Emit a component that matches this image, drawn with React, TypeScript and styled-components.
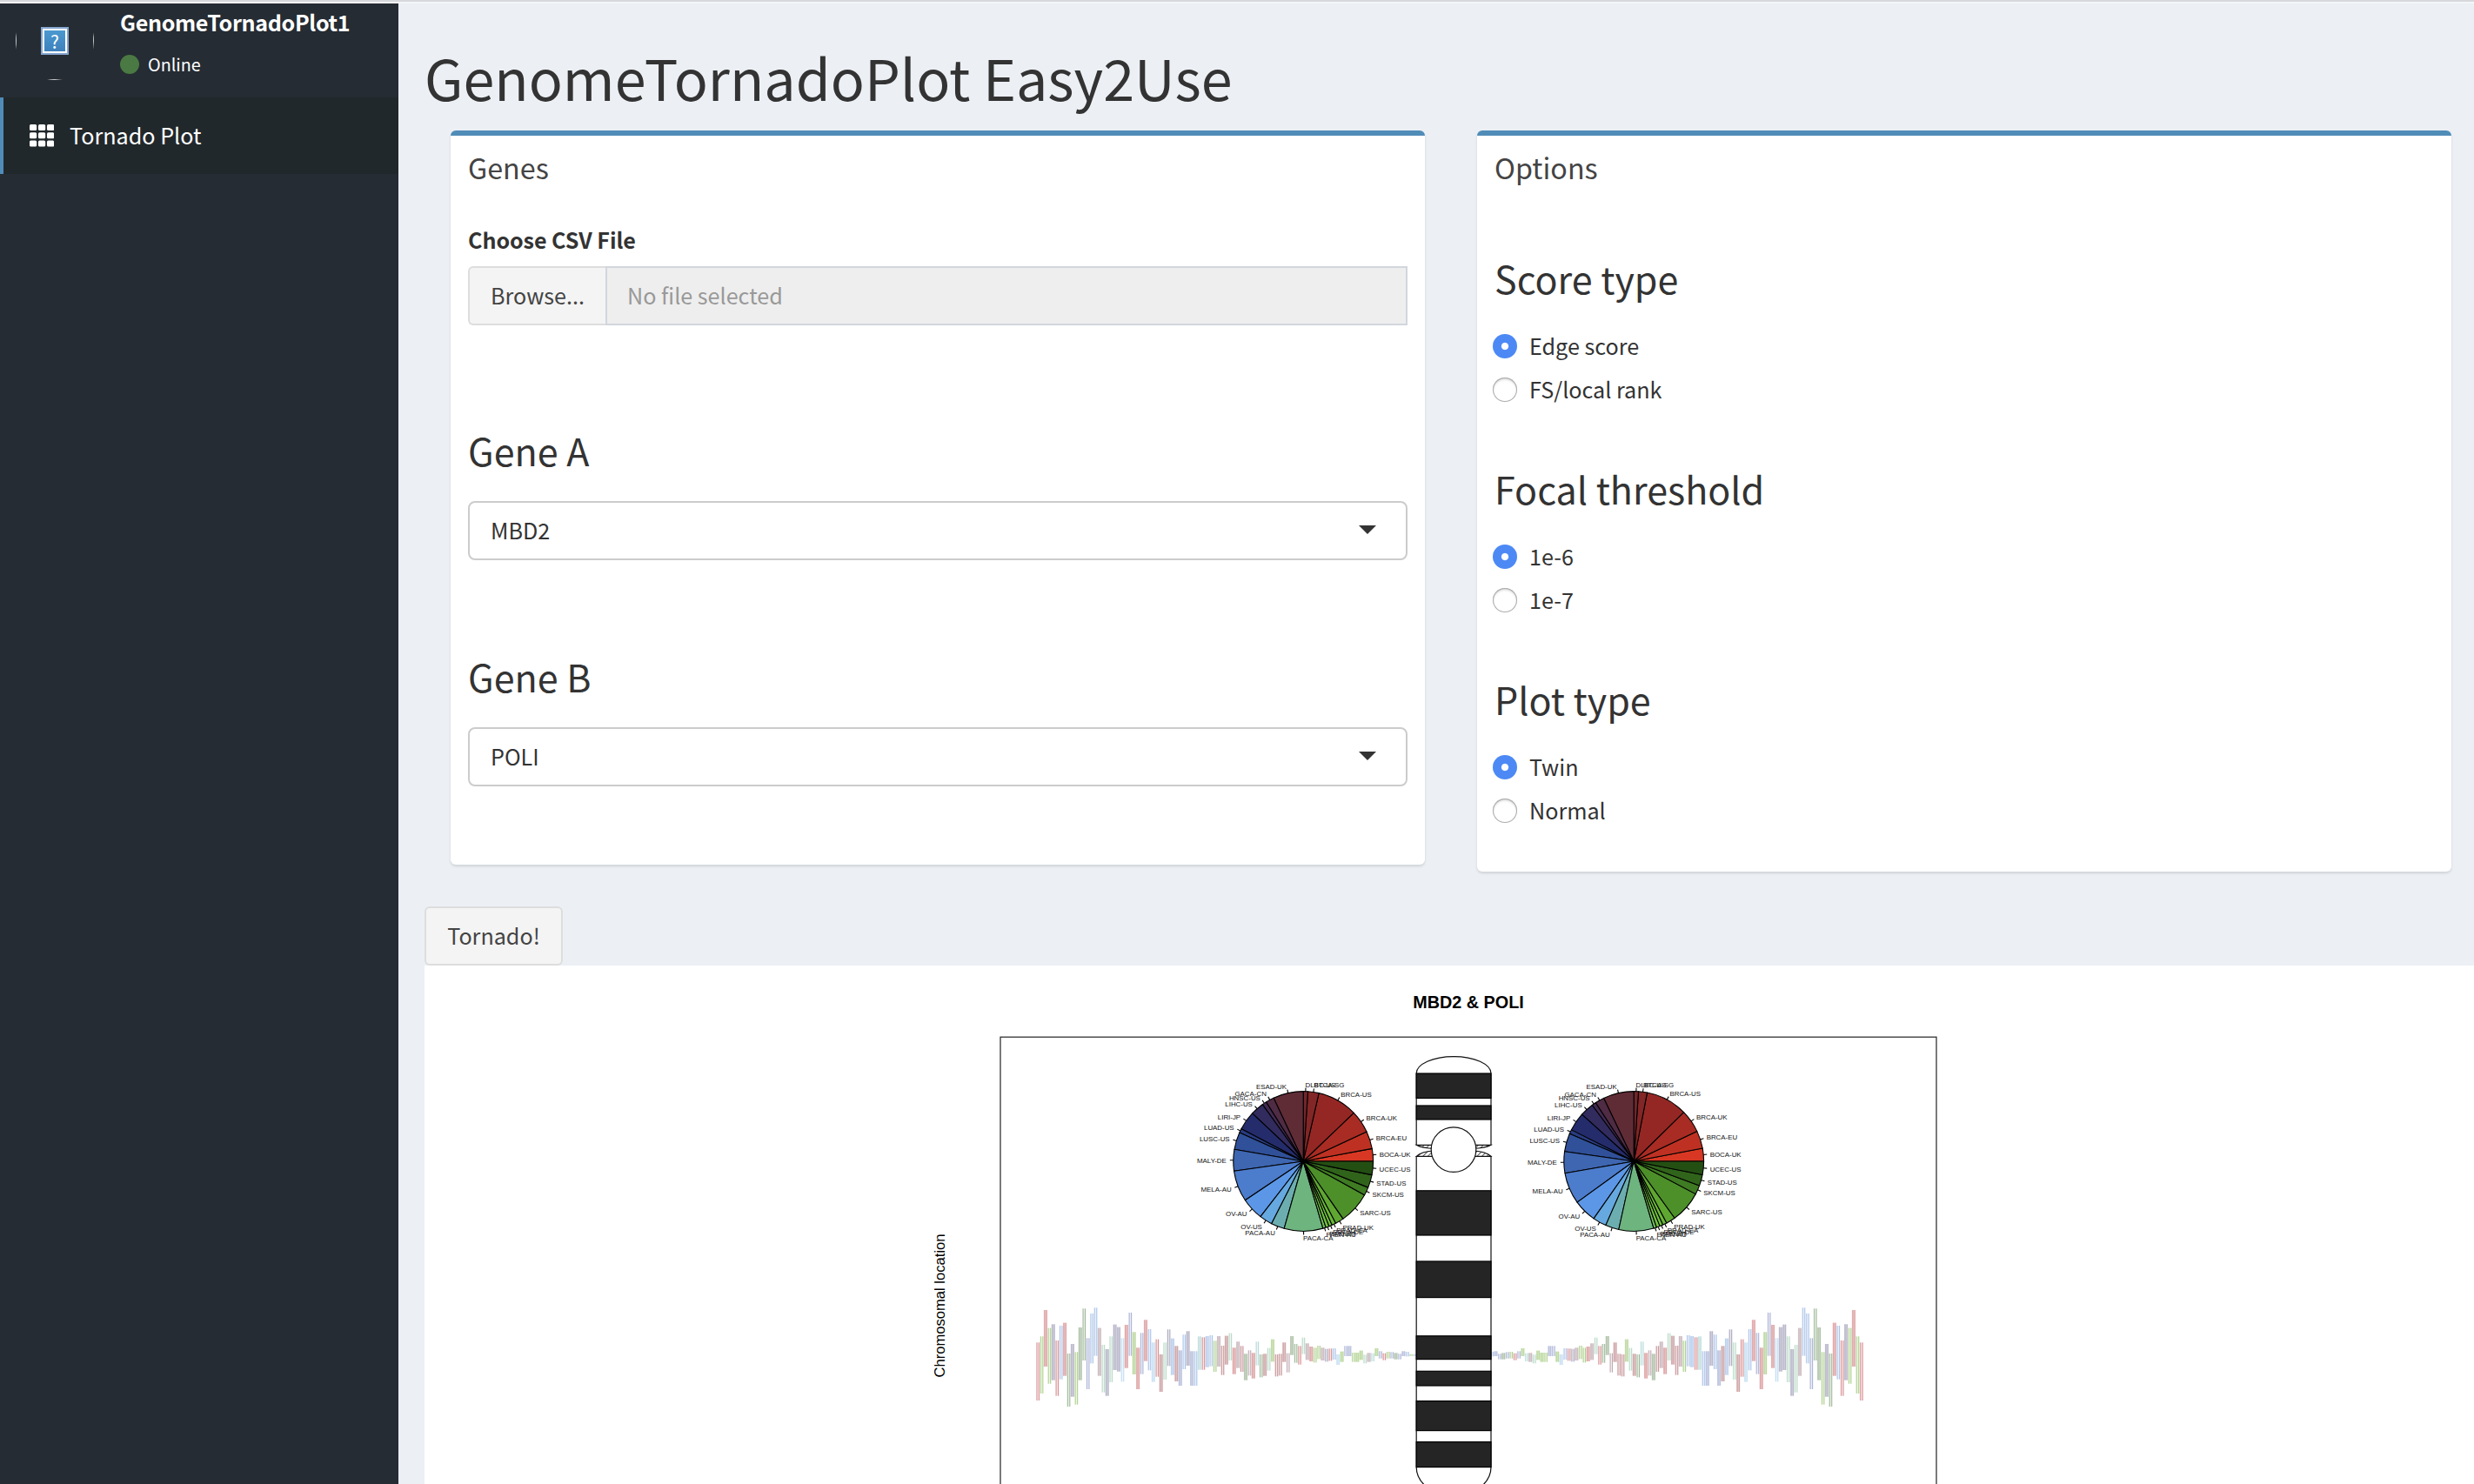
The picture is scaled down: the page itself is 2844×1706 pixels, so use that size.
import React from "react";
import styled, { createGlobalStyle } from "styled-components";

const SANS = '"Noto Sans CJK SC", "Noto Sans", sans-serif';
const ARIAL = '"Liberation Sans", Arial, sans-serif';

const GlobalStyle = createGlobalStyle`
  *, *::before, *::after { box-sizing: border-box; }
  body {
    margin: 0;
    overflow: hidden;
    background: #ecf0f5;
    color: #333;
    font-family: ${SANS};
    font-size: 25.15px;
  }
`;

const Page = styled.div`
  display: flex;
  flex-direction: column;
  width: 100%;
  height: 1706px;
  overflow: hidden;
  background: #ecf0f5;
`;

const TopEdge = styled.div`
  flex: none;
  height: 4px;
  background: #f5f6f8;
  border-top: 2px solid #d7d8db;
`;

const Body = styled.div`
  display: flex;
  flex: 1;
  min-height: 0;
`;

const Sidebar = styled.aside`
  flex: none;
  width: 458px;
  background: #252c33;
  color: #fff;
  overflow: hidden;
`;

const UserPanel = styled.div`
  display: flex;
  height: 108px;
  padding-left: 18px;
  gap: 30px;
`;

const Avatar = styled.div`
  flex: none;
  width: 90px;
  height: 90px;
  margin-top: -2px;
  border-radius: 50%;
  overflow: hidden;
  display: flex;
`;

const AvatarFrame = styled.div`
  flex: 1;
  display: flex;
  align-items: center;
  justify-content: center;
  border: 1px solid #c9cbcc;
  border-top: 0;
`;

const MissingImage = styled.span`
  display: flex;
  align-items: center;
  justify-content: center;
  width: 32px;
  height: 32px;
  border: 2px solid #86a6d0;
  box-shadow: inset 0 0 0 2px #fff;
  background: linear-gradient(#4b9bd2, #3d7fbb);
  color: #fff;
  font-size: 21px;
  line-height: 28px;
`;

const UserInfo = styled.div`
  display: flex;
  flex-direction: column;
  padding-top: 3px;
  gap: 16px;
`;

const UserName = styled.div`
  font-weight: 700;
  font-size: 25.07px;
  line-height: 36px;
  letter-spacing: -0.32px;
`;

const Status = styled.div`
  display: flex;
  align-items: center;
  gap: 10px;
  font-size: 19.8px;
  line-height: 30px;
`;

const StatusDot = styled.i`
  width: 22px;
  height: 22px;
  border-radius: 50%;
  background: #4b7943;
`;

const MenuItem = styled.a`
  display: flex;
  align-items: center;
  gap: 18px;
  height: 88px;
  padding-left: 30px;
  border-left: 4px solid #508cb8;
  background: #21282b;
`;

const MenuLabel = styled.span`
  padding-bottom: 2px;
`;

const Content = styled.main`
  flex: 1;
  min-width: 0;
  display: flex;
  flex-direction: column;
  align-items: flex-start;
  padding: 48px 0 0 30px;
`;

const Title = styled.h1`
  margin: 0 0 26px;
  font-size: 64.62px;
  font-weight: 400;
  line-height: 72px;
`;

const Columns = styled.div`
  display: flex;
  align-items: flex-start;
  gap: 60px;
  height: 892px;
  padding-left: 30px;
`;

const Box = styled.section<{ $h: number }>`
  width: 1120px;
  height: ${(p) => p.$h}px;
  padding: 18px 20px 0;
  border-top: 6px solid #508cb8;
  border-radius: 6px;
  background: #fff;
  box-shadow: 0 2px 3px rgba(0, 0, 0, 0.12);
`;

const BoxTitle = styled.h3`
  margin: 0;
  color: #444;
  font-size: 32.25px;
  font-weight: 400;
  line-height: 36px;
`;

const Label = styled.label`
  display: block;
  margin: 45px 0 11px;
  font-size: 25.07px;
  font-weight: 700;
  line-height: 40px;
  letter-spacing: -0.05px;
`;

const FileInput = styled.div`
  display: flex;
  height: 68px;
  margin-bottom: 117px;
  line-height: 62px;
`;

const Browse = styled.span`
  width: 158px;
  padding-left: 24px;
  border: 2px solid #ddd;
  border-right: 0;
  border-radius: 6px 0 0 6px;
  background: #f4f4f4;
  color: #444;
`;

const FileName = styled.span`
  flex: 1;
  padding-left: 23px;
  border: 2px solid #d2d6de;
  background: #eee;
  color: #999;
`;

const SubHeading = styled.h2<{ $top?: number; $gap: number }>`
  margin: ${(p) => p.$top ?? 0}px 0 ${(p) => p.$gap}px;
  font-size: 43px;
  font-weight: 400;
  line-height: 52px;
`;

const Select = styled.div`
  display: flex;
  align-items: flex-start;
  justify-content: space-between;
  height: 68px;
  padding: 0 34px 0 24px;
  border: 2px solid #ccc;
  border-radius: 8px;
  line-height: 62px;
`;

const Caret = styled.i`
  margin-top: 26px;
  border: 10px solid transparent;
  border-top-color: #333;
  border-bottom-width: 0;
`;

const RadioRow = styled.div`
  display: flex;
  align-items: center;
  gap: 14px;
  height: 50px;
  margin-left: -2px;
`;

const RadioLabel = styled.span`
  padding-bottom: 2px;
`;

const Radio = styled.i<{ $on: boolean }>`
  width: 28px;
  height: 28px;
  border-radius: 50%;
  background: ${(p) =>
    p.$on ? "radial-gradient(circle, #fff 0 3.6px, #4c89f5 4.6px)" : "#fff"};
  box-shadow: ${(p) =>
    p.$on ? "none" : "inset 0 0 0 1px #acacac, inset 0 2px 3px rgba(0,0,0,.2)"};
`;

const Button = styled.button`
  width: 159px;
  height: 68px;
  padding: 0 0 2px;
  border: 2px solid #ddd;
  border-radius: 6px;
  background: #f4f4f4;
  color: #444;
  font: inherit;
  line-height: 62px;
`;

const PlotArea = styled.div`
  align-self: stretch;
  height: 596px;
  background: #fff;
`;

const PlotSvg = styled.svg`
  display: block;
  font-family: ${ARIAL};
`;

const GridIcon = () => (
  <svg width="28" height="26" viewBox="0 0 28 26" fill="#fff">
    {[0, 1, 2].map((r) =>
      [0, 1, 2].map((c) => (
        <rect key={`${r}${c}`} x={c * 10} y={r * 9.3} width="8.2" height="7" rx="1.5" />
      ))
    )}
  </svg>
);

const SLICES: [string, string][] = [
  ["BOCA-UK", "#d83823"],
  ["BRCA-EU", "#be3122"],
  ["BRCA-UK", "#a82c23"],
  ["BRCA-US", "#942724"],
  ["BTCA-SG", "#822627"],
  ["DLBC-US", "#72262a"],
  ["ESAD-UK", "#5f2c36"],
  ["GACA-CN", "#4f2b44"],
  ["HNSC-US", "#412a50"],
  ["LIHC-US", "#312b5e"],
  ["LIRI-JP", "#242c6c"],
  ["LUAD-US", "#293c82"],
  ["LUSC-US", "#305099"],
  ["MALY-DE", "#3e66b1"],
  ["MELA-AU", "#4c7ccc"],
  ["OV-AU", "#5c97e7"],
  ["OV-US", "#66a8e0"],
  ["PACA-AU", "#6caeb0"],
  ["PACA-CA", "#6eb47f"],
  ["PAEN-AU", "#70bb5a"],
  ["PAEN-IT", "#70c040"],
  ["PBCA-DE", "#70c13c"],
  ["PRAD-CA", "#6ab838"],
  ["PRAD-UK", "#5fa731"],
  ["SARC-US", "#4d9029"],
  ["SKCM-US", "#3f7b22"],
  ["STAD-US", "#31641b"],
  ["UCEC-US", "#244f13"],
];

const LEFT_ANGLES = [
  0, 10.5, 25.1, 43.8, 77.1, 86.2, 90, 115.1, 122.1, 125.7, 136.8, 152.4, 155.8, 170.2,
  188.1, 213.8, 232.3, 243, 254.1, 286.4, 288.9, 291.7, 294.3, 297.7, 304.7, 331.1, 338,
  348.8, 360,
];
const RIGHT_ANGLES = [
  0, 10.8, 25.5, 44.5, 79, 86.2, 90, 115.5, 123.2, 126.6, 138, 153.3, 156.8, 171.9, 189.8,
  215.9, 235, 246.3, 257.5, 286.5, 289, 291.9, 294.6, 298, 305.7, 332.1, 339.7, 348.9, 360,
];

const Pie = ({ cx, cy, angles }: { cx: number; cy: number; angles: number[] }) => {
  const R = 80.4;
  const at = (deg: number, r: number): [number, number] => {
    const t = (deg * Math.PI) / 180;
    return [cx + r * Math.cos(t), cy - r * Math.sin(t)];
  };
  return (
    <g stroke="#000" strokeWidth="1.1" strokeLinejoin="round">
      {SLICES.map(([name, color], i) => {
        const [x1, y1] = at(angles[i], R);
        const [x2, y2] = at(angles[i + 1], R);
        return (
          <path
            key={name}
            d={`M${cx} ${cy}L${x1} ${y1}A${R} ${R} 0 0 0 ${x2} ${y2}Z`}
            fill={color}
          />
        );
      })}
      {SLICES.map(([name], i) => {
        const mid = (angles[i] + angles[i + 1]) / 2;
        const [x1, y1] = at(mid, R);
        const [x2, y2] = at(mid, R * 1.05);
        const [tx, ty] = at(mid, R * 1.1);
        return (
          <g key={name}>
            <line x1={x1} y1={y1} x2={x2} y2={y2} />
            <text
              x={tx >= cx ? tx - 0.6 : tx}
              y={ty + 3}
              fontSize="7.9"
              fill="#111"
              stroke="none"
              textAnchor={tx >= cx ? "start" : "end"}
            >
              {name}
            </text>
          </g>
        );
      })}
    </g>
  );
};

const BANDS = [
  [1234, 1262.5],
  [1271, 1287],
  [1368.8, 1420],
  [1450, 1491.6],
  [1535.8, 1562.6],
  [1576.3, 1593],
  [1610.6, 1644.6],
  [1657.6, 1686.6],
];

const Chromosome = () => (
  <g stroke="#111" strokeWidth="1.2" fill="#fff">
    <defs>
      <pattern id="hatch" width="4" height="4" patternUnits="userSpaceOnUse" patternTransform="rotate(45)">
        <rect width="4" height="4" fill="#fff" stroke="none" />
        <line x1="0" y1="0" x2="0" y2="4" stroke="#111" strokeWidth="1.4" />
      </pattern>
    </defs>
    <path d="M1628.2 1316.3V1234A42.9 19.4 0 0 1 1714 1234V1316.3" />
    <path d="M1628.2 1329.3V1686.6A42.9 33 0 0 0 1714 1686.6V1329.3" />
    <g fill="url(#hatch)">
      <path d="M1628.2 1316.3H1650V1320.5Q1634 1320 1628.2 1316.3Z" />
      <path d="M1714 1316.3H1692V1320.5Q1708 1320 1714 1316.3Z" />
      <path d="M1628.2 1329.3H1650V1323Q1634 1323.5 1628.2 1329.3Z" />
      <path d="M1714 1329.3H1692V1323Q1708 1323.5 1714 1329.3Z" />
    </g>
    {BANDS.map(([a, b]) => (
      <rect key={a} x="1628.2" y={a} width="85.8" height={b - a} fill="#252525" stroke="#000" />
    ))}
    <circle cx="1671" cy="1321.6" r="25.8" />
  </g>
);

/* r red, g lime, G dark green, m mint, t teal, s sky, b blue, i indigo, p purple, v mauve */
const HUES: Record<string, string> = {
  r: "#c9666a",
  R: "#b06a6e",
  g: "#8fbe60",
  G: "#7a9c70",
  m: "#9bcbb0",
  t: "#9acbca",
  s: "#a6cdec",
  b: "#8aace0",
  i: "#8a97c6",
  p: "#8884a4",
  v: "#a88a94",
};

/* top and bottom in thirds of a pixel below y = 1480, hue, filled */
const BARS: [number, number, string, 0 | 1][] = [
  [190, 390, "r", 0], [169, 366, "g", 0], [78, 273, "r", 1], [140, 332, "g", 0],
  [127, 320, "p", 1], [183, 374, "r", 0], [132, 317, "b", 0], [122, 305, "r", 1],
  [228, 411, "G", 0], [195, 377, "p", 1], [223, 404, "g", 0], [138, 320, "G", 1],
  [73, 252, "G", 0], [175, 351, "i", 0], [90, 262, "b", 0], [70, 236, "b", 0],
  [140, 305, "v", 1], [198, 362, "m", 0], [213, 374, "p", 1], [169, 327, "m", 0],
  [128, 285, "p", 1], [137, 290, "p", 1], [175, 325, "s", 0], [129, 278, "r", 1],
  [87, 236, "i", 0], [154, 300, "g", 1], [208, 351, "r", 1], [157, 299, "i", 0],
  [112, 254, "r", 1], [144, 286, "b", 0], [190, 326, "s", 1], [179, 308, "r", 0],
  [231, 360, "R", 1], [190, 318, "m", 0], [145, 271, "p", 0], [176, 302, "b", 1],
  [202, 324, "R", 1], [217, 339, "i", 1], [163, 282, "b", 0], [151, 270, "p", 1],
  [220, 339, "i", 1], [220, 339, "b", 0], [169, 284, "t", 1], [172, 284, "r", 0],
  [168, 275, "b", 1], [165, 272, "b", 0], [184, 291, "g", 0], [168, 273, "v", 1],
  [201, 302, "R", 0], [167, 266, "R", 1], [158, 252, "m", 0], [208, 299, "r", 1],
  [187, 278, "v", 1], [202, 291, "R", 0], [229, 320, "G", 1], [217, 304, "v", 0],
  [226, 314, "r", 1], [187, 269, "t", 0], [231, 310, "G", 0], [229, 305, "R", 1],
  [209, 287, "m", 0], [179, 256, "g", 1], [231, 307, "R", 0], [229, 304, "R", 0],
  [190, 257, "R", 1], [227, 293, "v", 0], [168, 233, "G", 1], [195, 260, "G", 0],
  [202, 266, "r", 0], [173, 230, "m", 0], [193, 250, "v", 1], [204, 255, "r", 1],
  [208, 259, "g", 0], [201, 247, "g", 0], [208, 252, "v", 1], [212, 256, "p", 0],
  [211, 253, "r", 0], [210, 249, "b", 0], [231, 267, "s", 1], [221, 257, "g", 1],
  [202, 237, "i", 0], [202, 237, "i", 1], [225, 257, "g", 0], [225, 257, "g", 1],
  [218, 250, "g", 1], [232, 262, "m", 0], [226, 257, "v", 1], [227, 255, "t", 0],
  [210, 237, "g", 1], [220, 245, "i", 0], [227, 251, "r", 0], [222, 245, "g", 0],
  [223, 245, "i", 0], [226, 248, "G", 1], [229, 248, "i", 0], [220, 237, "i", 1],
  [222, 238, "b", 0], [231, 236, "g", 1], [231, 236, "b", 1],
];

const Tornado = ({ mirrored }: { mirrored?: boolean }) => (
  <g>
    {BARS.map(([a, b, hue, filled], i) => {
      const left = 1191 + i * (438 / 99);
      const x = mirrored ? 3332.7 - left - 4 : left;
      const y = 1480 + a / 3;
      const h = (b - a) / 3;
      const c = HUES[hue];
      return (
        <g key={i} fill={c}>
          <rect x={x} y={y} width="4.1" height={h} opacity={filled ? 0.4 : 0.14} />
          <rect x={x + 0.5} y={y} width="1" height={h} opacity={filled ? 0.35 : 0.65} />
          <rect x={x + 2.9} y={y} width="1" height={h} opacity={filled ? 0.35 : 0.7} />
        </g>
      );
    })}
  </g>
);

const Plot = () => (
  <PlotSvg width="2356" height="596" viewBox="488 1110 2356 596">
    <text x="1688" y="1159" fontSize="19.8" fontWeight="700" textAnchor="middle" fill="#000">
      MBD2 &amp; POLI
    </text>
    <text
      transform="translate(1086 1501) rotate(-90)"
      fontSize="16.6"
      textAnchor="middle"
      fill="#000"
    >
      Chromosomal location
    </text>
    <rect x="1150" y="1192.2" width="1076" height="700" fill="none" stroke="#333" strokeWidth="1.3" />
    <Tornado />
    <Tornado mirrored />
    <Chromosome />
    <Pie cx={1498.2} cy={1335} angles={LEFT_ANGLES} />
    <Pie cx={1878.2} cy={1335} angles={RIGHT_ANGLES} />
  </PlotSvg>
);

const OPTION_GROUPS = [
  { title: "Score type", options: ["Edge score", "FS/local rank"] },
  { title: "Focal threshold", options: ["1e-6", "1e-7"] },
  { title: "Plot type", options: ["Twin", "Normal"] },
];

export default function App() {
  return (
    <Page>
      <GlobalStyle />
      <TopEdge />
      <Body>
        <Sidebar>
          <UserPanel>
            <Avatar>
              <AvatarFrame>
                <MissingImage>?</MissingImage>
              </AvatarFrame>
            </Avatar>
            <UserInfo>
              <UserName>GenomeTornadoPlot1</UserName>
              <Status>
                <StatusDot />
                Online
              </Status>
            </UserInfo>
          </UserPanel>
          <MenuItem>
            <GridIcon />
            <MenuLabel>Tornado Plot</MenuLabel>
          </MenuItem>
        </Sidebar>
        <Content>
          <Title>GenomeTornadoPlot Easy2Use</Title>
          <Columns>
            <Box $h={844}>
              <BoxTitle>Genes</BoxTitle>
              <Label>Choose CSV File</Label>
              <FileInput>
                <Browse>Browse...</Browse>
                <FileName>No file selected</FileName>
              </FileInput>
              <SubHeading $gap={33}>Gene A</SubHeading>
              <Select>
                MBD2
                <Caret />
              </Select>
              <SubHeading $top={107} $gap={33}>
                Gene B
              </SubHeading>
              <Select>
                POLI
                <Caret />
              </Select>
            </Box>
            <Box $h={852}>
              <BoxTitle>Options</BoxTitle>
              {OPTION_GROUPS.map((group, i) => (
                <React.Fragment key={group.title}>
                  <SubHeading $top={i === 0 ? 83 : 62} $gap={28}>
                    {group.title}
                  </SubHeading>
                  {group.options.map((option, j) => (
                    <RadioRow key={option}>
                      <Radio $on={j === 0} />
                      <RadioLabel>{option}</RadioLabel>
                    </RadioRow>
                  ))}
                </React.Fragment>
              ))}
            </Box>
          </Columns>
          <Button>Tornado!</Button>
          <PlotArea>
            <Plot />
          </PlotArea>
        </Content>
      </Body>
    </Page>
  );
}
